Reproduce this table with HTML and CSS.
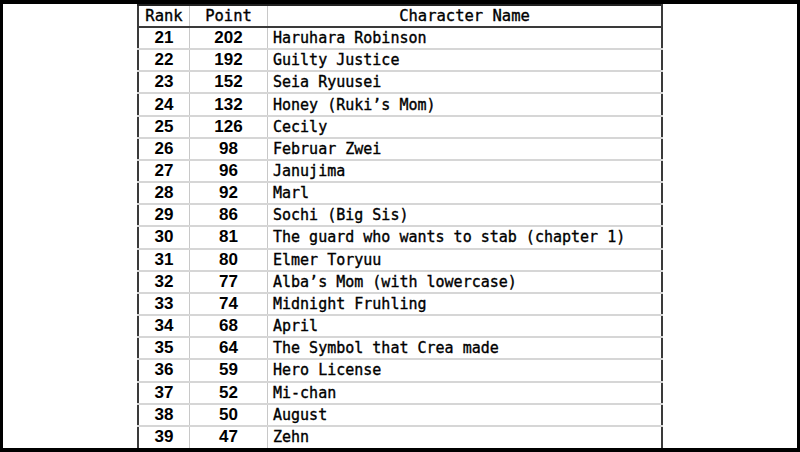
FILE: index.html
```html
<!DOCTYPE html>
<html lang="en">
<head>
    <meta charset="UTF-8">
    <meta name="viewport" content="width=device-width, initial-scale=1.0">
    <title>Character Popularity Poll - Ranks 21 to 39</title>
    <link rel="stylesheet" href="styles.css">
</head>
<body>
    <div class="sheet">
        <table class="ranking">
            <thead>
                <tr>
                    <th class="rank">Rank</th>
                    <th class="point">Point</th>
                    <th class="name">Character Name</th>
                </tr>
            </thead>
            <tbody>
                <tr><td class="rank">21</td><td class="point">202</td><td class="name">Haruhara Robinson</td></tr>
                <tr><td class="rank">22</td><td class="point">192</td><td class="name">Guilty Justice</td></tr>
                <tr><td class="rank">23</td><td class="point">152</td><td class="name">Seia Ryuusei</td></tr>
                <tr><td class="rank">24</td><td class="point">132</td><td class="name">Honey (Ruki’s Mom)</td></tr>
                <tr><td class="rank">25</td><td class="point">126</td><td class="name">Cecily</td></tr>
                <tr><td class="rank">26</td><td class="point">98</td><td class="name">Februar Zwei</td></tr>
                <tr><td class="rank">27</td><td class="point">96</td><td class="name">Janujima</td></tr>
                <tr><td class="rank">28</td><td class="point">92</td><td class="name">Marl</td></tr>
                <tr><td class="rank">29</td><td class="point">86</td><td class="name">Sochi (Big Sis)</td></tr>
                <tr><td class="rank">30</td><td class="point">81</td><td class="name">The guard who wants to stab (chapter 1)</td></tr>
                <tr><td class="rank">31</td><td class="point">80</td><td class="name">Elmer Toryuu</td></tr>
                <tr><td class="rank">32</td><td class="point">77</td><td class="name">Alba’s Mom (with lowercase)</td></tr>
                <tr><td class="rank">33</td><td class="point">74</td><td class="name">Midnight Fruhling</td></tr>
                <tr><td class="rank">34</td><td class="point">68</td><td class="name">April</td></tr>
                <tr><td class="rank">35</td><td class="point">64</td><td class="name">The Symbol that Crea made</td></tr>
                <tr><td class="rank">36</td><td class="point">59</td><td class="name">Hero License</td></tr>
                <tr><td class="rank">37</td><td class="point">52</td><td class="name">Mi-chan</td></tr>
                <tr><td class="rank">38</td><td class="point">50</td><td class="name">August</td></tr>
                <tr><td class="rank">39</td><td class="point">47</td><td class="name">Zehn</td></tr>
            </tbody>
        </table>
    </div>
</body>
</html>
```

FILE: styles.css
```css
html, body {
    margin: 0;
    height: 100%;
}
body {
    background-color: #000;
    overflow: hidden;
}
.sheet {
    box-sizing: border-box;
    height: 444px;
    margin: 4px 3px;
    background-color: #fff;
    display: flex;
    justify-content: center;
}
.ranking {
    width: 526px;
    height: 444px;
    border-collapse: collapse;
    border-left: 2px solid #3a3a3a;
    border-right: 2px solid #3a3a3a;
    border-top: 2px solid #222;
    font-family: "DejaVu Sans Mono", "Liberation Mono", monospace;
    font-size: 15px;
    color: #000;
    -webkit-text-stroke: 0.35px #000;
}
.ranking tr {
    height: 22px;
}
.ranking th {
    font-weight: normal;
    font-size: 15.5px;
    padding: 0;
    border-bottom: 2px solid #3a3a3a;
    border-right: 1px solid #c8c8c8;
}
.ranking td {
    padding: 0;
    border-bottom: 2px solid #d6d6d6;
    border-right: 1px solid #c8c8c8;
}
.ranking tbody tr:last-child td {
    border-bottom: none;
}
.rank {
    width: 50px;
    text-align: center;
}
.point {
    width: 77px;
    text-align: center;
}
td.rank, td.point {
    font-family: "Liberation Sans", Arial, sans-serif;
    font-weight: bold;
    font-size: 17px;
    -webkit-text-stroke: 0;
}
td.name {
    padding-left: 5px;
    text-align: left;
}
th.name {
    text-align: center;
}
```
